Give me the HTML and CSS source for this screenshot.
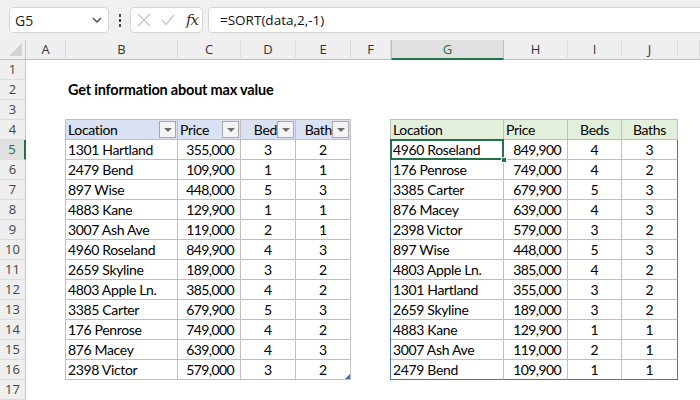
FILE: index.html
```html
<!DOCTYPE html>
<html>
<head>
<meta charset="utf-8">
<link rel="stylesheet" href="styles.css">
</head>
<body>
<div class="toolbar">
  <div class="namebox"><span>G5</span>
    <svg class="chev" width="10" height="6" viewBox="0 0 10 6"><polyline points="1,1 5,5 9,1" fill="none" stroke="#444" stroke-width="1.3"/></svg>
  </div>
  <div class="dots"><i></i><i></i><i></i></div>
  <div class="fxbox">
    <svg width="14" height="14" viewBox="0 0 14 14"><path d="M1 1 L13 13 M13 1 L1 13" stroke="#c4c4c4" stroke-width="1.2"/></svg>
    <svg width="14" height="12" viewBox="0 0 14 12"><polyline points="1,6 5,10.5 13,1" fill="none" stroke="#c4c4c4" stroke-width="1.2"/></svg>
    <span class="fx">fx</span>
  </div>
  <div class="formula">=SORT(data,2,-1)</div>
</div>

<div class="sheet">
  <div class="corner"><span class="tri"></span></div>
  <div class="colh">A</div>
  <div class="colh">B</div>
  <div class="colh">C</div>
  <div class="colh">D</div>
  <div class="colh">E</div>
  <div class="colh">F</div>
  <div class="colh sel">G</div>
  <div class="colh">H</div>
  <div class="colh">I</div>
  <div class="colh">J</div>
  <div class="colh"></div>

  <div class="rowh r1">1</div>
  <div class="rowh r2">2</div>
  <div class="rowh r3">3</div>
  <div class="rowh r4">4</div>
  <div class="rowh r5 sel">5</div>
  <div class="rowh r6">6</div>
  <div class="rowh r7">7</div>
  <div class="rowh r8">8</div>
  <div class="rowh r9">9</div>
  <div class="rowh r10">10</div>
  <div class="rowh r11">11</div>
  <div class="rowh r12">12</div>
  <div class="rowh r13">13</div>
  <div class="rowh r14">14</div>
  <div class="rowh r15">15</div>
  <div class="rowh r16">16</div>
  <div class="rowh r17">17</div>

  <div class="title">Get information about max value</div>

  <div class="tbl tleft">
    <div class="th"><span class="lbl">Location</span><span class="fb"></span></div>
    <div class="th"><span class="lbl">Price</span><span class="fb"></span></div>
    <div class="th"><span class="lbl rt">Bed</span><span class="fb"></span></div>
    <div class="th"><span class="lbl rt">Bath</span><span class="fb"></span></div>

    <div class="td">1301 Hartland</div><div class="td num">355,000</div><div class="td ctr">3</div><div class="td ctr">2</div>
    <div class="td">2479 Bend</div><div class="td num">109,900</div><div class="td ctr">1</div><div class="td ctr">1</div>
    <div class="td">897 Wise</div><div class="td num">448,000</div><div class="td ctr">5</div><div class="td ctr">3</div>
    <div class="td">4883 Kane</div><div class="td num">129,900</div><div class="td ctr">1</div><div class="td ctr">1</div>
    <div class="td">3007 Ash Ave</div><div class="td num">119,000</div><div class="td ctr">2</div><div class="td ctr">1</div>
    <div class="td">4960 Roseland</div><div class="td num">849,900</div><div class="td ctr">4</div><div class="td ctr">3</div>
    <div class="td">2659 Skyline</div><div class="td num">189,000</div><div class="td ctr">3</div><div class="td ctr">2</div>
    <div class="td">4803 Apple Ln.</div><div class="td num">385,000</div><div class="td ctr">4</div><div class="td ctr">2</div>
    <div class="td">3385 Carter</div><div class="td num">679,900</div><div class="td ctr">5</div><div class="td ctr">3</div>
    <div class="td">176 Penrose</div><div class="td num">749,000</div><div class="td ctr">4</div><div class="td ctr">2</div>
    <div class="td">876 Macey</div><div class="td num">639,000</div><div class="td ctr">4</div><div class="td ctr">3</div>
    <div class="td">2398 Victor</div><div class="td num">579,000</div><div class="td ctr">3</div><div class="td ctr grip">2</div>
  </div>

  <div class="tbl tright">
    <div class="th">Location</div>
    <div class="th">Price</div>
    <div class="th ctr">Beds</div>
    <div class="th ctr">Baths</div>
    <div class="spill">
      <div class="td active">4960 Roseland<span class="handle"></span></div><div class="td num">849,900</div><div class="td ctr">4</div><div class="td ctr">3</div>
      <div class="td">176 Penrose</div><div class="td num">749,000</div><div class="td ctr">4</div><div class="td ctr">2</div>
      <div class="td">3385 Carter</div><div class="td num">679,900</div><div class="td ctr">5</div><div class="td ctr">3</div>
      <div class="td">876 Macey</div><div class="td num">639,000</div><div class="td ctr">4</div><div class="td ctr">3</div>
      <div class="td">2398 Victor</div><div class="td num">579,000</div><div class="td ctr">3</div><div class="td ctr">2</div>
      <div class="td">897 Wise</div><div class="td num">448,000</div><div class="td ctr">5</div><div class="td ctr">3</div>
      <div class="td">4803 Apple Ln.</div><div class="td num">385,000</div><div class="td ctr">4</div><div class="td ctr">2</div>
      <div class="td">1301 Hartland</div><div class="td num">355,000</div><div class="td ctr">3</div><div class="td ctr">2</div>
      <div class="td">2659 Skyline</div><div class="td num">189,000</div><div class="td ctr">3</div><div class="td ctr">2</div>
      <div class="td">4883 Kane</div><div class="td num">129,900</div><div class="td ctr">1</div><div class="td ctr">1</div>
      <div class="td">3007 Ash Ave</div><div class="td num">119,000</div><div class="td ctr">2</div><div class="td ctr">1</div>
      <div class="td">2479 Bend</div><div class="td num">109,900</div><div class="td ctr">1</div><div class="td ctr">1</div>
    </div>
  </div>
</div>
</body>
</html>
```

FILE: styles.css
```css
* { box-sizing: border-box; }
html, body { margin: 0; padding: 0; }
body {
  width: 700px;
  height: 400px;
  overflow: hidden;
  background: #fff;
  font-family: Lato, "Liberation Sans", sans-serif;
  color: #000;
}

/* ---------- formula bar ---------- */
.toolbar {
  height: 40px;
  background: #f0f0f0;
  display: flex;
  align-items: flex-start;
  padding: 7px 0 0 9px;
  font-family: "Open Sans", "Noto Sans", sans-serif;
}
.namebox {
  width: 100px;
  height: 26px;
  background: #fff;
  border: 1px solid #d6d6d6;
  border-radius: 4px;
  display: flex;
  align-items: center;
  justify-content: space-between;
  padding: 0 6px 0 5px;
  font-size: 14px;
  color: #222;
}
.chev { display: block; }
.dots {
  width: 3px;
  margin: 7px 8px 0 10px;
  display: flex;
  flex-direction: column;
  gap: 2px;
}
.dots i {
  display: block;
  width: 2px;
  height: 3px;
  background: #444;
}
.fxbox {
  width: 73px;
  height: 26px;
  background: #fff;
  border: 1px solid #d6d6d6;
  border-radius: 4px;
  display: flex;
  align-items: center;
  padding: 0 0 0 6px;
  gap: 10px;
}
.fxbox svg { display: block; }
.fx {
  font-family: "DejaVu Serif", "Liberation Serif", serif;
  font-style: italic;
  font-size: 15px;
  color: #333;
  letter-spacing: -1px;
  margin-left: 1px;
}
.formula {
  flex: 1;
  margin-left: 5px;
  height: 26px;
  background: #fff;
  border: 1px solid #d6d6d6;
  border-right: none;
  border-radius: 4px 0 0 4px;
  padding-left: 11px;
  font-size: 13.5px;
  line-height: 24px;
  color: #111;
}

/* ---------- sheet grid ---------- */
.sheet {
  display: grid;
  grid-template-columns: 26px 40px 112px 63px 55px 55px 40px 113px 64px 54px 56px 22px;
  grid-template-rows: repeat(18, 20px);
}
.corner {
  background: #efefef;
  border-right: 1px solid #c6c6c6;
  border-bottom: 1px solid #bdbdbd;
  position: relative;
}
.tri {
  position: absolute;
  right: 3px;
  bottom: 3px;
  width: 0;
  height: 0;
  border-left: 13px solid transparent;
  border-bottom: 13px solid #d2d2d2;
}
.colh {
  background: #efefef;
  border-right: 1px solid #dcdcdc;
  border-bottom: 1px solid #bdbdbd;
  font-family: "Open Sans", "Noto Sans", sans-serif;
  font-size: 13px;
  color: #333;
  text-align: center;
  line-height: 19px;
}
.colh.sel {
  background: #e0e0e0;
  color: #217346;
  border-bottom: 2px solid #217346;
  border-right-color: #bdbdbd;
  border-left: 1px solid #bdbdbd;
}
.rowh {
  grid-column: 1;
  background: #efefef;
  border-right: 1px solid #c6c6c6;
  border-bottom: 1px solid #dcdcdc;
  font-family: "Open Sans", "Noto Sans", sans-serif;
  font-size: 13px;
  color: #444;
  text-align: center;
  line-height: 19px;
}
.rowh.sel {
  background: #e0e0e0;
  color: #217346;
  border-right: 2px solid #217346;
}
.r1 { grid-row: 2; } .r2 { grid-row: 3; } .r3 { grid-row: 4; } .r4 { grid-row: 5; }
.r5 { grid-row: 6; } .r6 { grid-row: 7; } .r7 { grid-row: 8; } .r8 { grid-row: 9; }
.r9 { grid-row: 10; } .r10 { grid-row: 11; } .r11 { grid-row: 12; } .r12 { grid-row: 13; }
.r13 { grid-row: 14; } .r14 { grid-row: 15; } .r15 { grid-row: 16; } .r16 { grid-row: 17; }
.r17 { grid-row: 18; }

.title {
  grid-row: 3;
  grid-column: 3 / span 4;
  font-weight: bold;
  font-size: 14.5px;
  letter-spacing: -0.2px;
  line-height: 20px;
  padding-left: 2px;
  white-space: nowrap;
}

/* ---------- tables ---------- */
.tbl {
  grid-row: 5 / span 13;
  display: grid;
  grid-auto-rows: 20px;
  margin: -1px 0 0 -1px;
  border-top: 1px solid #bfbfbf;
  border-left: 1px solid #bfbfbf;
  font-size: 14px;
  letter-spacing: -0.35px;
}
.tleft {
  grid-column: 3 / span 4;
  grid-template-columns: 112px 63px 55px 55px;
}
.tright {
  grid-column: 8 / span 4;
  grid-template-columns: 113px 64px 54px 56px;
}
.th, .td {
  border-right: 1px solid #bfbfbf;
  border-bottom: 1px solid #bfbfbf;
  line-height: 19px;
  padding: 0 2px;
  white-space: nowrap;
  overflow: hidden;
}
.tleft .th {
  background: #d9e1f2;
  display: flex;
  align-items: center;
  padding-right: 1px;
}
.tright .th { background: #e2efda; }
.lbl { flex: 1; }
.lbl.rt { text-align: right; }
.fb {
  width: 17px;
  height: 17px;
  border: 1px solid #a8a8a8;
  background: #f4f4f4;
  position: relative;
  flex: none;
}
.fb::after {
  content: "";
  position: absolute;
  left: 4px;
  top: 6px;
  border-left: 4px solid transparent;
  border-right: 4px solid transparent;
  border-top: 4px solid #6e6e6e;
}
.num { text-align: right; padding-right: 6px; letter-spacing: -0.6px; }
.ctr { text-align: center; }
.grip { position: relative; overflow: visible; }
.grip::after {
  content: "";
  position: absolute;
  right: 0;
  bottom: 0;
  border-left: 5px solid transparent;
  border-bottom: 5px solid #4a5fb5;
}

.spill {
  grid-column: 1 / -1;
  grid-row: 2 / span 12;
  display: grid;
  grid-template-columns: 113px 64px 54px 56px;
  grid-auto-rows: 20px;
  margin: 0 0 0 -1px;
  border-left: 1px solid #4472c4;
}
.spill .td:nth-child(4n) { border-right-color: #4472c4; }
.spill .td:nth-last-child(-n+4) { border-bottom-color: #4472c4; }
.active {
  position: relative;
  overflow: visible;
  z-index: 2;
}
.active::before {
  content: "";
  position: absolute;
  left: -1px;
  top: -1px;
  right: -1px;
  bottom: -1px;
  border: 2px solid #217346;
}
.handle {
  position: absolute;
  right: -4px;
  bottom: -4px;
  width: 6px;
  height: 6px;
  background: #217346;
  border: 1px solid #fff;
  z-index: 3;
}
```
